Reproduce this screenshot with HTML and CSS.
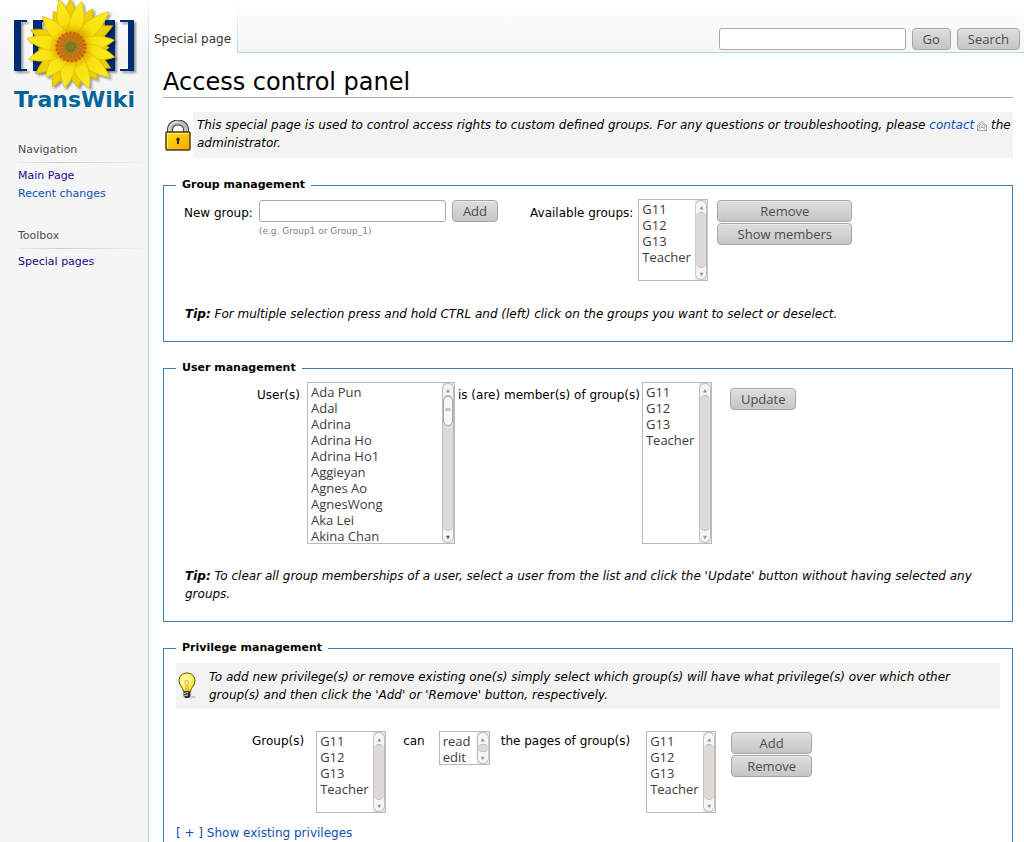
FILE: index.html
```
<!DOCTYPE html>
<html lang="en">
  <head>
    <meta charset="UTF-8" />
    <meta name="viewport" content="width=device-width, initial-scale=1.0" />
    <title>Access control panel - TransWiki</title>
    <link rel="stylesheet" href="styles.css">
  </head>

  <body>
    <aside class="sidebar">
      <a class="logo" href="#">
        <svg width="128" height="92" viewBox="10 0 128 92" aria-hidden="true">
          <defs>
            <radialGradient id="petal-fill" gradientUnits="userSpaceOnUse" cx="0" cy="0" r="46">
              <stop offset="0.3" stop-color="#e0a800" />
              <stop offset="0.5" stop-color="#f8e010" />
              <stop offset="1" stop-color="#fdec1c" />
            </radialGradient>
            <radialGradient id="seed-fill">
              <stop offset="0" stop-color="#7d7a1c" />
              <stop offset="0.4" stop-color="#a2801c" />
              <stop offset="0.65" stop-color="#c06a12" />
              <stop offset="1" stop-color="#e08a10" />
            </radialGradient>
            <filter id="shadow" x="-20%" y="-20%" width="140%" height="140%">
              <feDropShadow dx="2" dy="2" stdDeviation="1" flood-color="#000" flood-opacity="0.4" />
            </filter>
            <path id="petal" d="M-5-10C-9-20-8-33 0-46C7-34 9-22 5-10Z" />
          </defs>
          <g fill="#002a72" filter="url(#shadow)">
            <path d="M14 20H27V22H21V69H27V71H14Z" />
            <path d="M33 20H52V22H42V69H52V71H33Z" />
            <path d="M115 20H96V22H105V69H96V71H115Z" />
            <path d="M134 20H120V22H128V69H120V71H134Z" />
          </g>
          <g transform="translate(71 47)" filter="url(#shadow)">
            <g fill="#ecd000" stroke="#c4a000" stroke-width="0.5">
              <use href="#petal" transform="rotate(-1) scale(1 1.06)" />
              <use href="#petal" transform="rotate(30) scale(1 0.96)" />
              <use href="#petal" transform="rotate(63) scale(1 1.02)" />
              <use href="#petal" transform="rotate(91) scale(1 0.83)" />
              <use href="#petal" transform="rotate(118) scale(1 0.98)" />
              <use href="#petal" transform="rotate(141) scale(1 0.91)" />
              <use href="#petal" transform="rotate(170) scale(1 0.9)" />
              <use href="#petal" transform="rotate(205) scale(1 0.96)" />
              <use href="#petal" transform="rotate(233) scale(1 0.96)" />
              <use href="#petal" transform="rotate(266) scale(1 0.72)" />
              <use href="#petal" transform="rotate(293) scale(1 0.96)" />
              <use href="#petal" transform="rotate(334) scale(1 0.87)" />
            </g>
            <g fill="url(#petal-fill)" stroke="#d0ac00" stroke-width="0.5">
              <use href="#petal" transform="rotate(-14) scale(1 1.07)" />
              <use href="#petal" transform="rotate(13) scale(1 1.02)" />
              <use href="#petal" transform="rotate(47) scale(1 1.13)" />
              <use href="#petal" transform="rotate(81) scale(1 0.96)" />
              <use href="#petal" transform="rotate(103) scale(1 0.98)" />
              <use href="#petal" transform="rotate(128) scale(1 1.07)" />
              <use href="#petal" transform="rotate(156) scale(1 0.98)" />
              <use href="#petal" transform="rotate(189) scale(1 0.9)" />
              <use href="#petal" transform="rotate(220) scale(1 0.85)" />
              <use href="#petal" transform="rotate(254) scale(1 0.96)" />
              <use href="#petal" transform="rotate(281) scale(1 0.98)" />
              <use href="#petal" transform="rotate(317) scale(1 0.91)" />
            </g>
            <circle r="15" fill="url(#seed-fill)" />
            <circle r="14" fill="none" stroke="#c4640f" stroke-width="3" stroke-dasharray="2 2" />
            <circle r="9" fill="none" stroke="#c9851c" stroke-width="3" stroke-dasharray="1 2" />
            <circle r="4" fill="none" stroke="#66731b" stroke-width="3" stroke-dasharray="1 1" />
          </g>
        </svg>
        <span>TransWiki</span>
      </a>
      <nav class="portal">
        <h2>Navigation</h2>
        <ul>
          <li><a class="visited" href="#">Main Page</a></li>
          <li><a href="#">Recent changes</a></li>
        </ul>
      </nav>
      <nav class="portal">
        <h2>Toolbox</h2>
        <ul>
          <li><a class="visited" href="#">Special pages</a></li>
        </ul>
      </nav>
    </aside>

    <div class="page">
      <header class="head">
        <a class="tab" href="#">Special page</a>
        <form class="search">
          <input type="text" aria-label="Search" />
          <button type="button">Go</button>
          <button type="button">Search</button>
        </form>
      </header>

      <main class="content">
        <h1>Access control panel</h1>

        <div class="intro">
          <svg width="26" height="32" viewBox="0 0 26 32" aria-hidden="true">
            <defs>
              <linearGradient id="lock-fill" x1="0" y1="0" x2="1" y2="1">
                <stop offset="0" stop-color="#ffe11a" />
                <stop offset="0.5" stop-color="#fcc30a" />
                <stop offset="1" stop-color="#f5a300" />
              </linearGradient>
            </defs>
            <path d="M5 15V10C5 0 21 0 21 10V15" fill="none" stroke="#3c3c3c" stroke-width="6" />
            <path d="M5 15V10C5 0 21 0 21 10V15" fill="none" stroke="#b9bdc0" stroke-width="4" />
            <path d="M4 14V10C4 5 8 2 13 2" fill="none" stroke="#eceeee" />
            <rect x="1" y="12" width="24" height="18" rx="1" fill="url(#lock-fill)" stroke="#4d3a0c" stroke-width="1.5" />
            <path d="M2.5 28V13.500H23.500" fill="none" stroke="#fff27a" />
            <path d="M13 17.500a2 2 0 0 1 1 3.500v3h-2v-3a2 2 0 0 1 1-3.500" fill="#33250a" />
          </svg>
          <p class="note">This special page is used to control access rights to custom defined groups. For any questions or troubleshooting, please <a href="#">contact<svg class="mail" width="10" height="10" viewBox="0 0 10 10" aria-hidden="true"><path d="M.5 4.500L5 .5L9.500 4.500V9.500H.5ZM.5 9.500L4 6.500H6L9.500 9.500M.5 4.500L3.500 7M9.500 4.500L6.500 7M2.500 5.500V4L5 2.500L7.500 4V5.500M3.500 5H6.500" fill="#fff" stroke="#888" stroke-width="0.7" /></svg></a> the administrator.</p>
        </div>

        <fieldset>
          <legend>Group management</legend>
          <div class="row group-row">
            <label for="new-group">New group:</label>
            <div class="new-group">
              <input type="text" id="new-group" />
              <small>(e.g. Group1 or Group_1)</small>
            </div>
            <button type="button">Add</button>
            <label class="available" for="available-groups">Available groups:</label>
            <div class="list">
              <select id="available-groups" multiple size="5">
                <option>G11</option>
                <option>G12</option>
                <option>G13</option>
                <option>Teacher</option>
              </select>
              <span class="scroll"><i></i></span>
            </div>
            <div class="buttons wide">
              <button type="button">Remove</button>
              <button type="button">Show members</button>
            </div>
          </div>
          <p class="tip"><b>Tip:</b> For multiple selection press and hold CTRL and (left) click on the groups you want to select or deselect.</p>
        </fieldset>

        <fieldset>
          <legend>User management</legend>
          <div class="row user-row">
            <label for="users">User(s)</label>
            <div class="list users">
              <select id="users" multiple size="10">
                <option>Ada Pun</option>
                <option>Adal</option>
                <option>Adrina</option>
                <option>Adrina Ho</option>
                <option>Adrina Ho1</option>
                <option>Aggieyan</option>
                <option>Agnes Ao</option>
                <option>AgnesWong</option>
                <option>Aka Lei</option>
                <option>Akina Chan</option>
              </select>
              <span class="scroll active"><i></i></span>
            </div>
            <label class="member" for="member-groups">is (are) member(s) of group(s)</label>
            <div class="list">
              <select id="member-groups" multiple size="10">
                <option>G11</option>
                <option>G12</option>
                <option>G13</option>
                <option>Teacher</option>
              </select>
              <span class="scroll"><i></i></span>
            </div>
            <button type="button" class="update">Update</button>
          </div>
          <p class="tip">
            <b>Tip:</b> To clear all group memberships of a user, select a user from the list and click the 'Update' button without having selected any groups.
          </p>
        </fieldset>

        <fieldset>
          <legend>Privilege management</legend>
          <div class="hint">
            <svg width="18" height="28" viewBox="0 0 18 28" aria-hidden="true">
              <defs>
                <radialGradient id="bulb-fill" cx="0.4" cy="0.4" r="0.6">
                  <stop offset="0" stop-color="#fffff0" />
                  <stop offset="0.5" stop-color="#fdfb70" />
                  <stop offset="1" stop-color="#ece320" />
                </radialGradient>
              </defs>
              <ellipse cx="12" cy="25" rx="6" ry="1.500" fill="#ccc" />
              <path d="M9 1C4 1 1 4.500 1 9C1 13.500 5 15 5.500 19.500H12.500C13 15 17 13.500 17 9C17 4.500 14 1 9 1Z" fill="url(#bulb-fill)" stroke="#55551a" />
              <path d="M8 19V12L6.500 9.500L9 8L11 9.500L10 12V19" fill="none" stroke="#ef9a2c" />
              <path d="M5.500 19.500H12.500V24L11 26H7L5.500 24Z" fill="#333" />
              <path d="M6 21.500L10 20.500M6 24L10 23" stroke="#ddd" />
            </svg>
            <p>To add new privilege(s) or remove existing one(s) simply select which group(s) will have what privilege(s) over which other group(s) and then click the 'Add' or 'Remove' button, respectively.</p>
          </div>
          <div class="row privilege-row">
            <label for="from-groups">Group(s)</label>
            <div class="list">
              <select id="from-groups" multiple size="5">
                <option>G11</option>
                <option>G12</option>
                <option>G13</option>
                <option>Teacher</option>
              </select>
              <span class="scroll"><i></i></span>
            </div>
            <label class="can" for="rights">can</label>
            <div class="list rights">
              <select id="rights" multiple size="2">
                <option>read</option>
                <option>edit</option>
              </select>
              <span class="scroll"><i></i></span>
            </div>
            <label class="pages" for="to-groups">the pages of group(s)</label>
            <div class="list">
              <select id="to-groups" multiple size="5">
                <option>G11</option>
                <option>G12</option>
                <option>G13</option>
                <option>Teacher</option>
              </select>
              <span class="scroll"><i></i></span>
            </div>
            <div class="buttons">
              <button type="button">Add</button>
              <button type="button">Remove</button>
            </div>
          </div>
          <a class="toggle" href="#">[ + ] Show existing privileges</a>
        </fieldset>
      </main>
    </div>
  </body>
</html>
```
FILE: styles.css
```
* {
  margin: 0;
  padding: 0;
  box-sizing: border-box;
}

body {
  display: flex;
  min-height: 100vh;
  background: #f5f5f5 linear-gradient(#fff, #f5f5f5) repeat-x 0 0 / 100% 52px;
  font-family: "DejaVu Sans", sans-serif;
  font-size: 12px;
  line-height: 18px;
  color: #000;
}

a {
  color: #104fb5;
  text-decoration: none;
}

a.visited {
  color: #1a0a88;
}

/* sidebar */
.sidebar {
  flex: 0 0 148px;
}

.logo {
  display: block;
  padding-left: 10px;
  height: 137px;
}

.logo svg {
  display: block;
}

.logo span {
  display: block;
  margin-top: -5px;
  padding-left: 4px;
  font-size: 22px;
  line-height: 26px;
  font-weight: bold;
  color: #006699;
}

.portal {
  padding-left: 18px;
  margin-bottom: 20px;
  font-size: 11px;
}

.portal h2 {
  padding: 4px 0;
  margin-bottom: 4px;
  font-size: 11px;
  font-weight: normal;
  color: #4d4d4d;
  background: linear-gradient(to right, #eee, #ccc 33%, #f3f3f3) no-repeat 0 100% / 100% 1px;
}

.portal ul {
  list-style: none;
}

/* top bar */
.page {
  flex: 1;
  min-width: 0;
  display: flex;
  flex-direction: column;
}

.head {
  display: flex;
  justify-content: space-between;
  height: 53px;
  border-left: 1px solid;
  border-image: linear-gradient(#fff, #a7d7f9) 1;
  background: linear-gradient(#a7d7f9, #a7d7f9) no-repeat 0 100% / 100% 1px;
}

.tab {
  padding: 30px 6px 0 5px;
  border-right: 1px solid;
  border-image: linear-gradient(#fff, #a7d7f9) 1;
  background: #fff;
  color: #333;
}

.search {
  display: flex;
  gap: 6px;
  padding: 28px 4px 0 0;
}

input {
  width: 187px;
  height: 22px;
  padding: 0 4px;
  border: 1px solid #aaa7a4;
  border-radius: 3px;
  background: #fff;
  font: 13px "Open Sans", sans-serif;
}

button {
  height: 22px;
  padding: 0 10px;
  border: 1px solid #a5a5a5;
  border-radius: 4px;
  background: linear-gradient(#dedede, #c6c6c6);
  box-shadow: inset 0 1px #e9e9e9;
  font: 13px/18px "Open Sans", sans-serif;
  color: #4c4c4c;
}

/* content */
.content {
  flex: 1;
  padding: 15px 11px 20px 14px;
  border-left: 1px solid #a7d7f9;
  background: #fff;
}

h1 {
  border-bottom: 1px solid #aaa;
  font-size: 24px;
  line-height: 29px;
  font-weight: normal;
}

.intro {
  display: flex;
  gap: 2px;
  margin: 14px 0 18px;
  padding-left: 2px;
}

.intro > svg {
  flex: none;
  margin-top: 8px;
}

.note {
  flex: 1;
  min-height: 46px;
  padding: 4px 0 6px 4px;
  background: #f3f3f3;
  font-style: italic;
}

.mail {
  margin: 0 0 -2px 3px;
}

fieldset {
  padding: 0 12px 18px;
  margin-bottom: 17px;
  border: 1px solid #3f7ab2;
}

legend {
  padding: 0 6px;
  font-size: 11px;
  font-weight: bold;
}

.row {
  display: flex;
  align-items: flex-start;
}

.row label {
  padding-top: 4px;
  white-space: nowrap;
}

/* list boxes */
.list {
  display: flex;
  width: 70px;
  border: 1px solid #bdb9b5;
}

select {
  flex: 1;
  min-width: 0;
  border: 0;
  border-radius: 0;
  background: #fff;
  font: 13px/16px "Open Sans", sans-serif;
  color: #3c3c3c;
  scrollbar-width: none;
}

option {
  height: 16px;
  min-height: 16px;
  padding: 0 3px;
}

.scroll {
  display: flex;
  flex-direction: column;
  width: 12px;
  border: 1px solid #bfbbb8;
  border-radius: 6px;
  background: #f5f5f5;
  box-shadow: 0 0 0 2px #e6e3e1;
  clip-path: inset(0);
}

.scroll::before,
.scroll::after {
  height: 11px;
  font-size: 5px;
  line-height: 12px;
  text-align: center;
  color: #999;
}

.scroll::before {
  content: "▲";
}

.scroll::after {
  content: "▼";
}

.scroll i {
  flex: 1;
  border: 1px solid #bfbbb8;
  border-width: 1px 0;
  border-radius: 5px;
  background: #dedad8;
}

.active i::before {
  content: "≡";
  display: block;
  height: 28px;
  border: 1px solid #aaa7a4;
  border-radius: 5px;
  background: #f7f7f7;
  font: 8px/26px "DejaVu Sans", sans-serif;
  text-align: center;
  color: #999;
}

.active::after {
  color: #555;
}

.buttons {
  display: flex;
  flex-direction: column;
  gap: 1px;
  width: 81px;
  padding-top: 1px;
}

.tip {
  padding: 0 9px;
  font-style: italic;
}

.group-row {
  padding: 5px 8px 0;
}

.group-row label {
  padding-top: 5px;
}

.new-group {
  display: flex;
  flex-direction: column;
  margin: 1px 6px 0;
}

.new-group small {
  font-size: 9px;
  color: #808080;
}

.group-row > button {
  margin-top: 1px;
}

.available {
  margin: 0 5px 0 32px;
}

.group-row .buttons {
  margin-left: 9px;
}

.group-row .wide {
  width: 135px;
}

.group-row + .tip {
  margin-top: 24px;
}

.user-row {
  padding: 5px 0 0 81px;
}

.users {
  width: 148px;
  margin-left: 7px;
}

.member {
  margin: 0 2px 0 3px;
}

.update {
  margin: 6px 0 0 18px;
}

.user-row + .tip {
  margin-top: 23px;
}

.hint {
  display: flex;
  align-items: center;
  gap: 13px;
  margin-top: 6px;
  padding: 5px 2px;
  background: #f3f3f3;
  font-style: italic;
}

.hint svg {
  flex: none;
}

.privilege-row {
  padding: 22px 0 11px 76px;
}

.privilege-row label {
  padding-top: 1px;
  margin-right: 12px;
}

.privilege-row .can {
  margin: 0 14px 0 17px;
}

.rights {
  width: 51px;
}

.privilege-row .pages {
  margin: 0 16px 0 11px;
}

.privilege-row .buttons {
  margin-left: 15px;
}
```
